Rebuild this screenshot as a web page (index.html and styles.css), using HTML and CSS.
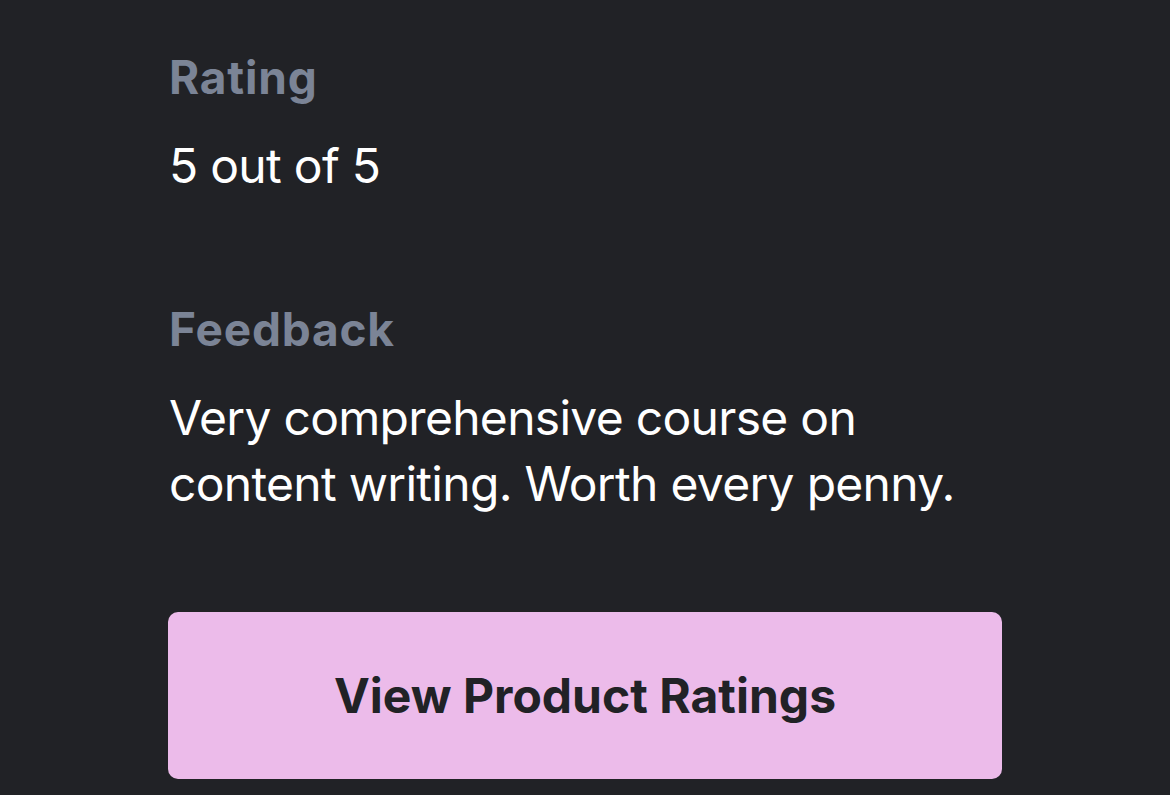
FILE: index.html
```html
<!DOCTYPE html>
<html lang="en">
<head>
<meta charset="utf-8">
<title>Review</title>
<link rel="stylesheet" href="styles.css">
</head>
<body>
<main class="review">
  <section class="field">
    <h2 class="label">Rating</h2>
    <p class="value">5 out of 5</p>
  </section>
  <section class="field">
    <h2 class="label">Feedback</h2>
    <p class="value">Very comprehensive course on<br>content writing. Worth every penny.</p>
  </section>
  <button class="cta" type="button">View Product Ratings</button>
</main>
</body>
</html>
```
FILE: styles.css
```css
html, body {
  margin: 0;
  padding: 0;
  background: #212226;
}
body {
  font-family: Inter, "Noto Sans", sans-serif;
  color: #ffffff;
  -webkit-font-smoothing: antialiased;
}
.review {
  display: flex;
  flex-direction: column;
  padding: 50px 168px 0 169px;
  gap: 103px;
}
.field {
  display: flex;
  flex-direction: column;
  gap: 29px;
}
.label {
  margin: 0;
  font-size: 46px;
  line-height: 54px;
  font-weight: 700;
  letter-spacing: 0.8px;
  color: #7b8496;
}
.value {
  margin: 0;
  font-size: 48px;
  line-height: 66px;
  font-weight: 400;
  letter-spacing: -0.7px;
  color: #ffffff;
}
.cta {
  margin-top: -8px;
  height: 167px;
  width: 834px;
  margin-left: -1px;
  border: none;
  border-radius: 10px;
  background: #ecbbea;
  color: #212226;
  font-family: Inter, "Noto Sans", sans-serif;
  font-size: 48px;
  font-weight: 700;
  cursor: pointer;
}
```
